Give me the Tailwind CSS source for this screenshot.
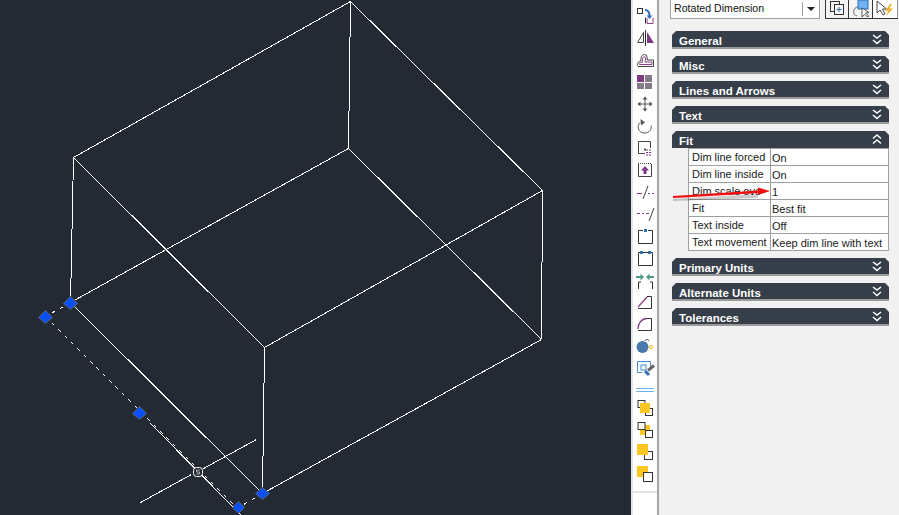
<!DOCTYPE html>
<html>
<head>
  <meta charset="utf-8">
  <script src="https://cdn.jsdelivr.net/npm/@tailwindcss/browser@4"></script>
</head>
<body class="w-[899px] h-[515px] overflow-hidden bg-[#f1f1f1] font-['Liberation_Sans',Arial,sans-serif]">
  <div class="flex h-[515px]">

    <!-- drawing area -->
    <div class="w-[631px] h-full bg-[#232a33] shrink-0">
      <svg width="631" height="515" viewBox="-0.5 -0.5 631 515" fill="none" stroke="#fff" stroke-width="1" shape-rendering="crispEdges">
        <path d="M350 1L73 157M350 1L542 190M350 1L348 148M73 157L264 347M264 347L542 190M542 190L541 339M73 157L70 302M348 148L70 302M348 148L541 339M264 347L262 493M70 302L262 493M262 493L541 339"/>
        <path d="M150 423L241 515M140 502L191 474M203 468L256 439"/>
        <path d="M70 302L45 316M262 493L238 507M45 316L238 509" stroke-dasharray="3.500 5.500"/>
        <rect x="193" y="467" width="9" height="9" rx="3" fill="#232a33" shape-rendering="auto"/>
        <path d="M199.500 469.500H196V471.500H199V473.500H195.500" stroke="#c8ccd0" stroke-width=".8" shape-rendering="auto"/>
        <g fill="#0a50f5" stroke="#5a6270" shape-rendering="auto">
          <path d="M45 310L52 317L45 323L38 317Z"/>
          <path d="M70 296L77 303L70 309L63 303Z"/>
          <path d="M139 406L146 413L139 419L132 413Z"/>
          <path d="M262 487L269 493L262 499L255 493Z"/>
          <path d="M238 501L244 507L238 513L232 507Z"/>
        </g>
      </svg>
    </div>

    <div class="w-[2px] h-full bg-[#e4e4e4] shrink-0"></div>

    <!-- modify toolbar -->
    <div class="w-[26px] h-full bg-white border-r-2 border-[#a6a6a6] shrink-0 pt-[5px] flex flex-col">
      <!-- copy -->
      <svg class="w-[22px] h-[22px] ml-px" viewBox="0 0 22 22" fill="none">
        <rect x="3.500" y="3.500" width="5" height="5" stroke="#333"/>
        <path d="M11 5C14 5 15.500 7 15.500 11" stroke="#2f6fb5" stroke-width="2"/>
        <path d="M12.500 10.500H18.500L15.500 14Z" fill="#2f6fb5"/>
        <path d="M13 13V18.500H19V13" stroke="#8b3f86"/>
        <path d="M11.500 12.500V18.500" stroke="#333"/>
      </svg>
      <!-- mirror -->
      <svg class="w-[22px] h-[22px] ml-px" viewBox="0 0 22 22" fill="none">
        <path d="M9.500 5.500V15.500H3.500Z" stroke="#444"/>
        <path d="M11.500 3V19" stroke="#333"/>
        <path d="M13 5V16H20Z" fill="#7d3a80"/>
      </svg>
      <!-- offset -->
      <svg class="w-[22px] h-[22px] ml-px" viewBox="0 0 22 22" fill="none">
        <path d="M4 17.500C2.500 14.500 4.500 12 7 12C6.500 8 8 5.500 10.500 5.500C13 5.500 13.500 8 13 11H19.500V17.500Z" stroke="#444"/>
        <path d="M5.500 15.500C4.500 14 6 13.500 8.500 13.500C8 10 9 7.500 10.500 7.500C12 7.500 11.500 10.500 11 13H18V15.500Z" stroke="#8b3f86"/>
      </svg>
      <!-- array -->
      <svg class="w-[22px] h-[22px] ml-px" viewBox="0 0 22 22">
        <rect x="3" y="4" width="7" height="7" fill="#7d3a80"/>
        <rect x="11" y="4" width="7" height="7" fill="#85798a"/>
        <rect x="3" y="12" width="7" height="6" fill="#85798a"/>
        <rect x="11" y="12" width="7" height="6" fill="#85798a"/>
      </svg>
      <!-- move -->
      <svg class="w-[22px] h-[22px] ml-px" viewBox="0 0 22 22" fill="none">
        <path d="M11 4V18M4 11H18" stroke="#555"/>
        <path d="M11 3.500L8.500 6.500H13.500ZM11 18.500L8.500 15.500H13.500ZM3.500 11L6.500 8.500V13.500ZM18.500 11L15.500 8.500V13.500Z" fill="#555"/>
      </svg>
      <!-- rotate -->
      <svg class="w-[22px] h-[22px] ml-px" viewBox="0 0 22 22" fill="none">
        <path d="M6 7.500C2.500 11 4 18 10.500 18C15.500 18 18 14 17 10.500" stroke="#555"/>
        <path d="M6.500 4L11 7.500L7 10.500Z" fill="#555"/>
      </svg>
      <!-- scale -->
      <svg class="w-[22px] h-[22px] ml-px" viewBox="0 0 22 22" fill="none">
        <path d="M4.500 16.500V4.500H16.500V11M4.500 16.500H11" stroke="#444"/>
        <path d="M12 13H17M12 15.500H17M12 18H17" stroke="#7d3a80" stroke-dasharray="2 1"/>
        <path d="M10 11.500H12V13.500H10Z" fill="#555"/>
      </svg>
      <!-- stretch -->
      <svg class="w-[22px] h-[22px] ml-px" viewBox="0 0 22 22" fill="none">
        <path d="M4.500 5V17.500H17.500V5" stroke="#444"/>
        <path d="M4 4.500H18" stroke="#444" stroke-dasharray="1 1"/>
        <path d="M11 7L15 11.500H12.500V15H9.500V11.500H7Z" fill="#7d3a80"/>
      </svg>
      <!-- trim -->
      <svg class="w-[22px] h-[22px] ml-px" viewBox="0 0 22 22" fill="none">
        <path d="M3 12.500H8M14 12.500H16M18 12.500H20" stroke="#7d3a80"/>
        <path d="M9 18L14 5" stroke="#444"/>
      </svg>
      <!-- extend -->
      <svg class="w-[22px] h-[22px] ml-px" viewBox="0 0 22 22" fill="none">
        <path d="M3 10.500H6M8 10.500H10M12 10.500H15" stroke="#7d3a80"/>
        <path d="M15 18L20 5" stroke="#444"/>
      </svg>
      <!-- break at point -->
      <svg class="w-[22px] h-[22px] ml-px" viewBox="0 0 22 22" fill="none">
        <path d="M9 5.500H4.500V18.500H18.500V5.500H14" stroke="#333"/>
        <rect x="10" y="4" width="3" height="3" fill="#2f6fb5"/>
      </svg>
      <!-- break -->
      <svg class="w-[22px] h-[22px] ml-px" viewBox="0 0 22 22" fill="none">
        <path d="M6 5.500H4.500V18.500H18.500V5.500H17M9 5.500H14" stroke="#333"/>
        <rect x="6" y="4" width="3" height="3" fill="#2f6fb5"/>
        <rect x="14" y="4" width="3" height="3" fill="#2f6fb5"/>
      </svg>
      <!-- join -->
      <svg class="w-[22px] h-[22px] ml-px" viewBox="0 0 22 22" fill="none">
        <path d="M2 8H8M20 8H14" stroke="#4f9a84" stroke-width="2"/>
        <path d="M10 8L6.500 4.500V11.500ZM12 8L15.500 4.500V11.500Z" fill="#4f9a84"/>
        <path d="M4.500 13V20M18.500 13V20M4.500 13H7M18.500 13H16" stroke="#333"/>
      </svg>
      <!-- chamfer -->
      <svg class="w-[22px] h-[22px] ml-px" viewBox="0 0 22 22" fill="none">
        <path d="M4 16L13 6" stroke="#8b3f86" stroke-width="1.300"/>
        <path d="M13 5.500H17.500V17.500H4" stroke="#333"/>
      </svg>
      <!-- fillet -->
      <svg class="w-[22px] h-[22px] ml-px" viewBox="0 0 22 22" fill="none">
        <path d="M4 16C4 10 8 5.500 13 5.500" stroke="#8b3f86" stroke-width="1.300"/>
        <path d="M13 5.500H17.500V17.500H4" stroke="#333"/>
      </svg>
      <!-- explode -->
      <svg class="w-[22px] h-[22px] ml-px" viewBox="0 0 22 22" fill="none">
        <circle cx="8.500" cy="12" r="6" fill="#4a78ad"/>
        <path d="M11 6C12 4 14 4 15 6" stroke="#333"/>
        <path d="M15 10H19V14H15Z" fill="#f2c230"/>
        <path d="M15 10L19 14M19 10L15 14" stroke="#fff" stroke-width=".7"/>
      </svg>
      <!-- edit -->
      <svg class="w-[22px] h-[22px] ml-px" viewBox="0 0 22 22" fill="none">
        <path d="M3.500 4.500H16.500V10M3.500 4.500V15.500H8" stroke="#3d8ad0"/>
        <rect x="7" y="8" width="5" height="5" fill="#fff" stroke="#3d8ad0"/>
        <path d="M11 14L15 18" stroke="#2f6fb5" stroke-width="3"/>
        <path d="M14 13.500L20 8.500" stroke="#666" stroke-width="3"/>
      </svg>

      <!-- separator -->
      <div class="h-[18px] flex flex-col justify-center">
        <div class="mx-[3px] h-[4px] border-y border-[#6fb0f0] mt-[4px]"></div>
      </div>

      <!-- draw order -->
      <svg class="w-[22px] h-[22px] ml-px" viewBox="0 0 22 22" fill="none">
        <rect x="4" y="3.500" width="7" height="7" stroke="#333"/>
        <rect x="11.500" y="11.500" width="7" height="7" stroke="#333"/>
        <rect x="6" y="6" width="10" height="10" fill="#fdc623"/>
      </svg>
      <svg class="w-[22px] h-[22px] ml-px" viewBox="0 0 22 22" fill="none">
        <rect x="6" y="6" width="10" height="10" fill="#fdc623"/>
        <rect x="4" y="3.500" width="7" height="7" fill="#fff" stroke="#333"/>
        <rect x="11.500" y="11.500" width="7" height="7" fill="#fff" stroke="#333"/>
      </svg>
      <svg class="w-[22px] h-[22px] ml-px" viewBox="0 0 22 22" fill="none">
        <rect x="10.500" y="10.500" width="8" height="8" stroke="#333"/>
        <rect x="3" y="3" width="11" height="11" fill="#fdc623"/>
      </svg>
      <svg class="w-[22px] h-[22px] ml-px" viewBox="0 0 22 22" fill="none">
        <rect x="3" y="3" width="11" height="11" fill="#fdc623"/>
        <rect x="9.500" y="9.500" width="9" height="9" fill="#fff" stroke="#333"/>
      </svg>

      <div class="mt-[6px] border-t-2 border-[#e2e2e2]"></div>
    </div>

    <!-- properties panel -->
    <div class="relative flex-1 pl-[11px] pr-[1px]">
      <div class="flex h-[19px] items-stretch">
        <div class="w-[150px] bg-white border border-t-0 border-[#a0a0a0] flex items-center text-[10.6px] text-[#111] pl-[3px] pb-[1px]">
          <span class="flex-1">Rotated Dimension</span>
          <div class="w-[17px] h-[14px] border-l border-[#a0a0a0] flex items-center justify-center">
            <div class="w-0 h-0 border-x-[4px] border-x-transparent border-t-[4px] border-t-[#222]"></div>
          </div>
        </div>
        <div class="ml-[5px] flex border-b border-[#333] h-[19px]">
          <div class="w-[24px] border-x border-[#333] bg-[#f5f5f5] flex justify-center">
            <svg class="w-[20px] h-[18px]" viewBox="0 0 20 18" fill="none">
              <rect x="3.500" y="1.500" width="9" height="10" stroke="#333"/>
              <rect x="7.500" y="4.500" width="9" height="10" fill="#f5f5f5" stroke="#333"/>
              <path d="M12 7V12M9.500 9.500H14.500" stroke="#2f6fb5"/>
            </svg>
          </div>
          <div class="w-[24px] border-r border-[#333] bg-[#f5f5f5] flex justify-center">
            <svg class="w-[22px] h-[18px]" viewBox="0 0 22 18" fill="none">
              <path d="M8 7C3 7 2 15 7 16" stroke="#666"/>
              <rect x="8" y="0" width="10" height="9" fill="#6fb0f0" stroke="#2f6fb5"/>
              <path d="M12 8L12 17L14.500 14.500L18 17L18.500 15.500L15.500 13L19 12.500Z" fill="#fff" stroke="#333" stroke-width=".8"/>
            </svg>
          </div>
          <div class="w-[25px] border-r border-[#999] bg-white flex justify-center">
            <svg class="w-[22px] h-[18px]" viewBox="0 0 22 18" fill="none">
              <path d="M3 1L3 13L6 10L9 15L11 14L8.500 9L12.500 9Z" fill="#fff" stroke="#333" stroke-width=".9"/>
              <path d="M16 4L11 11H14L12 16L19 8.500H15.500L18 4Z" fill="#f3b62c"/>
            </svg>
          </div>
        </div>
      </div>

      <div class="ml-[2px] mt-[12px] w-[217px] flex flex-col">
        <!-- each roll-up sits 25px below the previous one -->
        <div class="h-[18px] mb-[7px] pb-px">
          <div class="h-[18px] pl-[7px] pr-[7px] flex items-center justify-between bg-[#363e49] border-b-2 border-[#9a9a9a] [clip-path:polygon(4px_0,calc(100%-4px)_0,100%_4px,100%_100%,0_100%,0_4px)] text-white text-[11.5px] font-bold">
            <span class="mt-[6px]">General</span>
            <svg width="10" height="11" viewBox="0 0 10 11" fill="none" stroke="#fff" stroke-width="1.500"><path d="M1 1L5 4L9 1M1 6L5 9.500L9 6"/></svg>
          </div>
        </div>
        <div class="h-[18px] mb-[7px] pb-px">
          <div class="h-[18px] pl-[7px] pr-[7px] flex items-center justify-between bg-[#363e49] border-b-2 border-[#9a9a9a] [clip-path:polygon(4px_0,calc(100%-4px)_0,100%_4px,100%_100%,0_100%,0_4px)] text-white text-[11.5px] font-bold">
            <span class="mt-[6px]">Misc</span>
            <svg width="10" height="11" viewBox="0 0 10 11" fill="none" stroke="#fff" stroke-width="1.500"><path d="M1 1L5 4L9 1M1 6L5 9.500L9 6"/></svg>
          </div>
        </div>
        <div class="h-[18px] mb-[7px] pb-px">
          <div class="h-[18px] pl-[7px] pr-[7px] flex items-center justify-between bg-[#363e49] border-b-2 border-[#9a9a9a] [clip-path:polygon(4px_0,calc(100%-4px)_0,100%_4px,100%_100%,0_100%,0_4px)] text-white text-[11.5px] font-bold">
            <span class="mt-[6px]">Lines and Arrows</span>
            <svg width="10" height="11" viewBox="0 0 10 11" fill="none" stroke="#fff" stroke-width="1.500"><path d="M1 1L5 4L9 1M1 6L5 9.500L9 6"/></svg>
          </div>
        </div>
        <div class="h-[18px] mb-[7px] pb-px">
          <div class="h-[18px] pl-[7px] pr-[7px] flex items-center justify-between bg-[#363e49] border-b-2 border-[#9a9a9a] [clip-path:polygon(4px_0,calc(100%-4px)_0,100%_4px,100%_100%,0_100%,0_4px)] text-white text-[11.5px] font-bold">
            <span class="mt-[6px]">Text</span>
            <svg width="10" height="11" viewBox="0 0 10 11" fill="none" stroke="#fff" stroke-width="1.500"><path d="M1 1L5 4L9 1M1 6L5 9.500L9 6"/></svg>
          </div>
        </div>

        <!-- Fit, expanded -->
        <div class="h-[17px] pl-[7px] pr-[7px] flex items-center justify-between bg-[#363e49] [clip-path:polygon(4px_0,calc(100%-4px)_0,100%_4px,100%_100%,0_100%,0_4px)] text-white text-[11.5px] font-bold">
          <span class="mt-[4px]">Fit</span>
          <svg width="10" height="11" viewBox="0 0 10 11" fill="none" stroke="#fff" stroke-width="1.500"><path d="M1 4.500L5 1L9 4.500M1 9.500L5 6L9 9.500"/></svg>
        </div>
        <table class="ml-[16px] w-[201px] table-fixed border-collapse bg-white text-[11px] text-[#1a1a1a] mb-[7px]">
          <colgroup><col class="w-[82px]"><col></colgroup>
          <tbody>
            <tr class="h-[17px]">
              <td class="border border-[#a0a0a0] pl-[3px] p-0 leading-[14px] overflow-hidden whitespace-nowrap">Dim line forced</td>
              <td class="border border-[#a0a0a0] pl-[1px] pt-[2px] leading-[14px] whitespace-nowrap overflow-hidden">On</td>
            </tr>
            <tr class="h-[17px]">
              <td class="border border-[#a0a0a0] pl-[3px] p-0 leading-[14px] overflow-hidden whitespace-nowrap">Dim line inside</td>
              <td class="border border-[#a0a0a0] pl-[1px] pt-[2px] leading-[14px] whitespace-nowrap overflow-hidden">On</td>
            </tr>
            <tr class="h-[17px]">
              <td class="border border-[#a0a0a0] pl-[3px] p-0 leading-[14px] overflow-hidden whitespace-nowrap">Dim scale ove</td>
              <td class="border border-[#a0a0a0] pl-[1px] pt-[2px] leading-[14px] whitespace-nowrap overflow-hidden">1</td>
            </tr>
            <tr class="h-[17px]">
              <td class="border border-[#a0a0a0] pl-[3px] p-0 leading-[14px] overflow-hidden whitespace-nowrap">Fit</td>
              <td class="border border-[#a0a0a0] pl-[1px] pt-[2px] leading-[14px] whitespace-nowrap overflow-hidden">Best fit</td>
            </tr>
            <tr class="h-[17px]">
              <td class="border border-[#a0a0a0] pl-[3px] p-0 leading-[14px] overflow-hidden whitespace-nowrap">Text inside</td>
              <td class="border border-[#a0a0a0] pl-[1px] pt-[2px] leading-[14px] whitespace-nowrap overflow-hidden">Off</td>
            </tr>
            <tr class="h-[17px]">
              <td class="border border-[#a0a0a0] pl-[3px] p-0 leading-[14px] overflow-hidden whitespace-nowrap">Text movement</td>
              <td class="border border-[#a0a0a0] pl-[1px] pt-[2px] leading-[14px] whitespace-nowrap overflow-hidden">Keep dim line with text</td>
            </tr>
          </tbody>
        </table>

        <div class="h-[18px] mb-[7px] pb-px">
          <div class="h-[18px] pl-[7px] pr-[7px] flex items-center justify-between bg-[#363e49] border-b-2 border-[#9a9a9a] [clip-path:polygon(4px_0,calc(100%-4px)_0,100%_4px,100%_100%,0_100%,0_4px)] text-white text-[11.5px] font-bold">
            <span class="mt-[6px]">Primary Units</span>
            <svg width="10" height="11" viewBox="0 0 10 11" fill="none" stroke="#fff" stroke-width="1.500"><path d="M1 1L5 4L9 1M1 6L5 9.500L9 6"/></svg>
          </div>
        </div>
        <div class="h-[18px] mb-[7px] pb-px">
          <div class="h-[18px] pl-[7px] pr-[7px] flex items-center justify-between bg-[#363e49] border-b-2 border-[#9a9a9a] [clip-path:polygon(4px_0,calc(100%-4px)_0,100%_4px,100%_100%,0_100%,0_4px)] text-white text-[11.5px] font-bold">
            <span class="mt-[6px]">Alternate Units</span>
            <svg width="10" height="11" viewBox="0 0 10 11" fill="none" stroke="#fff" stroke-width="1.500"><path d="M1 1L5 4L9 1M1 6L5 9.500L9 6"/></svg>
          </div>
        </div>
        <div class="h-[18px] mb-[7px] pb-px">
          <div class="h-[18px] pl-[7px] pr-[7px] flex items-center justify-between bg-[#363e49] border-b-2 border-[#9a9a9a] [clip-path:polygon(4px_0,calc(100%-4px)_0,100%_4px,100%_100%,0_100%,0_4px)] text-white text-[11.5px] font-bold">
            <span class="mt-[6px]">Tolerances</span>
            <svg width="10" height="11" viewBox="0 0 10 11" fill="none" stroke="#fff" stroke-width="1.500"><path d="M1 1L5 4L9 1M1 6L5 9.500L9 6"/></svg>
          </div>
        </div>
      </div>

      <!-- red annotation arrow over the grid -->
      <svg class="absolute left-[13px] top-[183px]" width="102" height="20" viewBox="0 0 102 20" fill="none">
        <path d="M1 16L86 11V15L1 18Z" fill="#000" opacity=".2"/>
        <path d="M1 13L86 7.500V4.500L98 8L86 12V10Q40 13 1 15Z" fill="#f01010"/>
      </svg>
    </div>
  </div>
</body>
</html>
